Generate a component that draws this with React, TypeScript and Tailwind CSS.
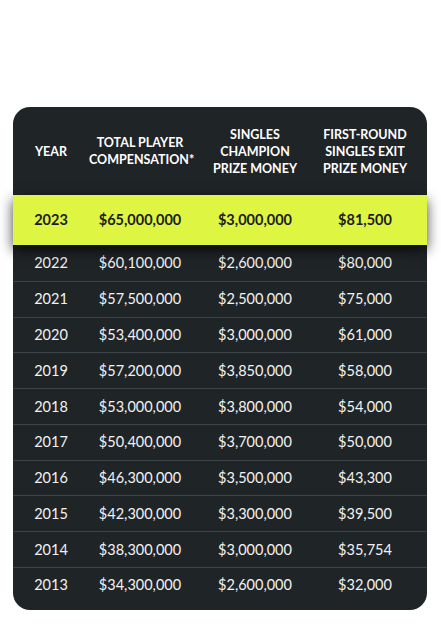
import React from 'react';

interface IRow {
  year: string;
  total: string;
  champion: string;
  firstRound: string;
}

const rows: IRow[] = [
  { year: '2022', total: '$60,100,000', champion: '$2,600,000', firstRound: '$80,000' },
  { year: '2021', total: '$57,500,000', champion: '$2,500,000', firstRound: '$75,000' },
  { year: '2020', total: '$53,400,000', champion: '$3,000,000', firstRound: '$61,000' },
  { year: '2019', total: '$57,200,000', champion: '$3,850,000', firstRound: '$58,000' },
  { year: '2018', total: '$53,000,000', champion: '$3,800,000', firstRound: '$54,000' },
  { year: '2017', total: '$50,400,000', champion: '$3,700,000', firstRound: '$50,000' },
  { year: '2016', total: '$46,300,000', champion: '$3,500,000', firstRound: '$43,300' },
  { year: '2015', total: '$42,300,000', champion: '$3,300,000', firstRound: '$39,500' },
  { year: '2014', total: '$38,300,000', champion: '$3,000,000', firstRound: '$35,754' },
  { year: '2013', total: '$34,300,000', champion: '$2,600,000', firstRound: '$32,000' },
];

const cols = 'grid grid-cols-[76px_102px_128px_92px] items-center text-center';

const App = () => {
  return (
    <div className="w-[441px] h-[644px] bg-white pt-[107px] px-[13px] font-['Lato',sans-serif]">
      <div className="w-[414px] h-[503px] bg-[#1f2427] rounded-[17px] flex flex-col">
        {/* header */}
        <div className={`${cols} h-[88px] text-white font-bold uppercase text-[12.5px] leading-[17px]`}>
          <div>Year</div>
          <div>
            Total Player
            <br />
            Compensation*
          </div>
          <div>
            Singles
            <br />
            Champion
            <br />
            Prize Money
          </div>
          <div>
            First-Round
            <br />
            Singles Exit
            <br />
            Prize Money
          </div>
        </div>

        {/* current year */}
        <div
          className={`${cols} h-[50px] bg-[#def542] text-[#1b1d1e] font-bold text-[14.5px] shadow-[0_5px_12px_rgba(0,0,0,0.75)] relative z-10`}>
          <div>2023</div>
          <div>$65,000,000</div>
          <div>$3,000,000</div>
          <div>$81,500</div>
        </div>

        <div className="flex flex-col text-[#f2f2f2] text-[14.5px]">
          {rows.map((row, i) => (
            <div
              key={row.year}
              className={`${cols} h-[35.75px] ${i === 0 ? '' : 'border-t border-[#3c4448]'}`}>
              <div>{row.year}</div>
              <div>{row.total}</div>
              <div>{row.champion}</div>
              <div>{row.firstRound}</div>
            </div>
          ))}
        </div>
      </div>
    </div>
  );
};

export default App;
